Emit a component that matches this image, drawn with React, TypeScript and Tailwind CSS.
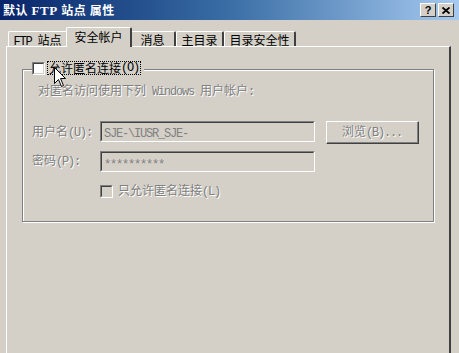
import React from "react";

const L = ({ children }: { children: React.ReactNode }) => (
  <span className="font-['Liberation_Mono',monospace] text-[12px] tracking-[-1.2px]">{children}</span>
);

const dis = "text-[#808080] [text-shadow:1px_1px_0_#ffffff]";

function Tab({ label, selected }: { label: React.ReactNode; selected?: boolean }) {
  if (selected) {
    return (
      <div className="relative z-10 -mx-[2px] -mb-[1px] h-[20px] pt-[3px] flex justify-center whitespace-nowrap bg-[#d4d0c8] border-t border-l border-white border-r-2 border-r-[#404040] rounded-t-[2px] text-black">
        {label}
      </div>
    );
  }
  return (
    <div className="h-[15px] pt-[2px] flex justify-center whitespace-nowrap bg-[#d4d0c8] border-t border-l border-white border-r-2 border-r-[#404040] rounded-t-[2px] text-black">
      {label}
    </div>
  );
}

function Sunken({ className, children }: { className?: string; children?: React.ReactNode }) {
  return (
    <div className={"border border-t-[#808080] border-l-[#808080] border-b-white border-r-white " + (className ?? "")}>
      <div className="w-full h-full border border-t-[#404040] border-l-[#404040] border-b-[#d4d0c8] border-r-[#d4d0c8]">
        {children}
      </div>
    </div>
  );
}

export default function App() {
  return (
    <div className="relative w-[459px] h-[353px] overflow-hidden bg-[#d4d0c8] font-['Noto_Sans_CJK_SC',sans-serif] text-[12px] leading-[12px] text-black">
      {/* Title bar */}
      <div className="h-[20px] flex items-center pl-[3px] pr-[5px] bg-gradient-to-r from-[#0a246a] via-[#3a6ea5] to-[#a6caf0]">
        <span className="text-white font-bold whitespace-nowrap tracking-[0.6px]">
          默认 <span className="font-['Liberation_Serif',serif] text-[13px]">FTP</span> 站点 属性
        </span>
        <div className="ml-auto flex gap-[2px]">
          <div className="w-[16px] h-[14px] bg-[#d4d0c8] border border-t-white border-l-white border-b-[#404040] border-r-[#404040] flex items-center justify-center font-bold text-[11px] leading-[11px] font-['Liberation_Sans',sans-serif]">
            ?
          </div>
          <div className="w-[16px] h-[14px] bg-[#d4d0c8] border border-t-white border-l-white border-b-[#404040] border-r-[#404040] flex items-center justify-center">
            <svg width="8" height="7" viewBox="0 0 8 7">
              <path d="M0.5 0.5 L7.5 6.5 M7.5 0.5 L0.5 6.5" stroke="#000" strokeWidth="1.8" />
            </svg>
          </div>
        </div>
      </div>

      {/* Body */}
      <div className="pl-[6px] pr-[8px] pt-[7px]">
        <div className="flex items-end h-[19px] pl-[2px]">
          <div className="w-[60px]">
            <Tab label={<span><L>FTP </L>站点</span>} />
          </div>
          <div className="w-[62px]">
            <Tab selected label="安全帐户" />
          </div>
          <div className="w-[46px]">
            <Tab label="消息" />
          </div>
          <div className="w-[48px]">
            <Tab label="主目录" />
          </div>
          <div className="w-[72px]">
            <Tab label="目录安全性" />
          </div>
        </div>

        {/* Panel */}
        <div className="h-[320px] border-t border-l border-white border-r-2 border-r-[#404040] px-[15px] pt-[22px]">
          <div className="border border-[#808080] shadow-[inset_1px_1px_0_#ffffff,1px_1px_0_#ffffff] h-[153px] pl-[9px]">
            {/* legend */}
            <div className="-mt-[9px] flex items-center h-[14px]">
              <div className="bg-[#d4d0c8] pr-[3px] flex items-center">
                <Sunken className="w-[13px] h-[13px]">
                  <div className="w-full h-full bg-white" />
                </Sunken>
                <div className="ml-[2px] border border-dotted border-black px-[1px] h-[14px] flex items-center whitespace-nowrap">
                  允许匿名连接<L>(O)</L>
                </div>
              </div>
            </div>
            <div className={"mt-[9px] ml-[6px] whitespace-nowrap " + dis}>
              对匿名访问使用下列<L> Windows </L>用户帐户<L>:</L>
            </div>
            {/* user row */}
            <div className="mt-[23px] flex items-start">
              <div className={"w-[68px] mt-[4px] whitespace-nowrap " + dis}>
                用户名<L>(U):</L>
              </div>
              <Sunken className="w-[215px] h-[21px]">
                <div className="pl-[2px] pt-[3px] text-[#808080]">
                  <L>SJE-\IUSR_SJE-</L>
                </div>
              </Sunken>
              <div className="ml-[11px] w-[93px] h-[23px] border border-t-white border-l-white border-b-[#404040] border-r-[#404040]">
                <div className="w-full h-full border-b border-r border-[#808080] flex items-center justify-center">
                  <span className={"whitespace-nowrap " + dis}>
                    浏览<L>(B)...</L>
                  </span>
                </div>
              </div>
            </div>
            {/* password row */}
            <div className="mt-[7px] flex items-start">
              <div className={"w-[68px] mt-[3px] whitespace-nowrap " + dis}>
                密码<L>(P):</L>
              </div>
              <Sunken className="w-[215px] h-[21px]">
                <div className="pl-[2px] pt-[4px] text-[#808080]">
                  <L>**********</L>
                </div>
              </Sunken>
            </div>
            {/* anonymous only */}
            <div className="mt-[12px] ml-[68px] flex items-center">
              <Sunken className="w-[13px] h-[13px]">
                <div className="w-full h-full bg-[#d4d0c8]" />
              </Sunken>
              <span className={"ml-[5px] whitespace-nowrap " + dis}>
                只允许匿名连接<L>(L)</L>
              </span>
            </div>
          </div>
        </div>
      </div>

      {/* cursor */}
      <svg className="absolute left-[54px] top-[67px]" width="13" height="21" viewBox="0 0 13 21">
        <path d="M0.5 0.5 L0.5 16.5 L4.5 12.5 L7.5 19.5 L9.5 18.5 L6.5 11.5 L11.5 11.5 Z" fill="#fff" stroke="#000" strokeWidth="1" />
      </svg>
    </div>
  );
}
